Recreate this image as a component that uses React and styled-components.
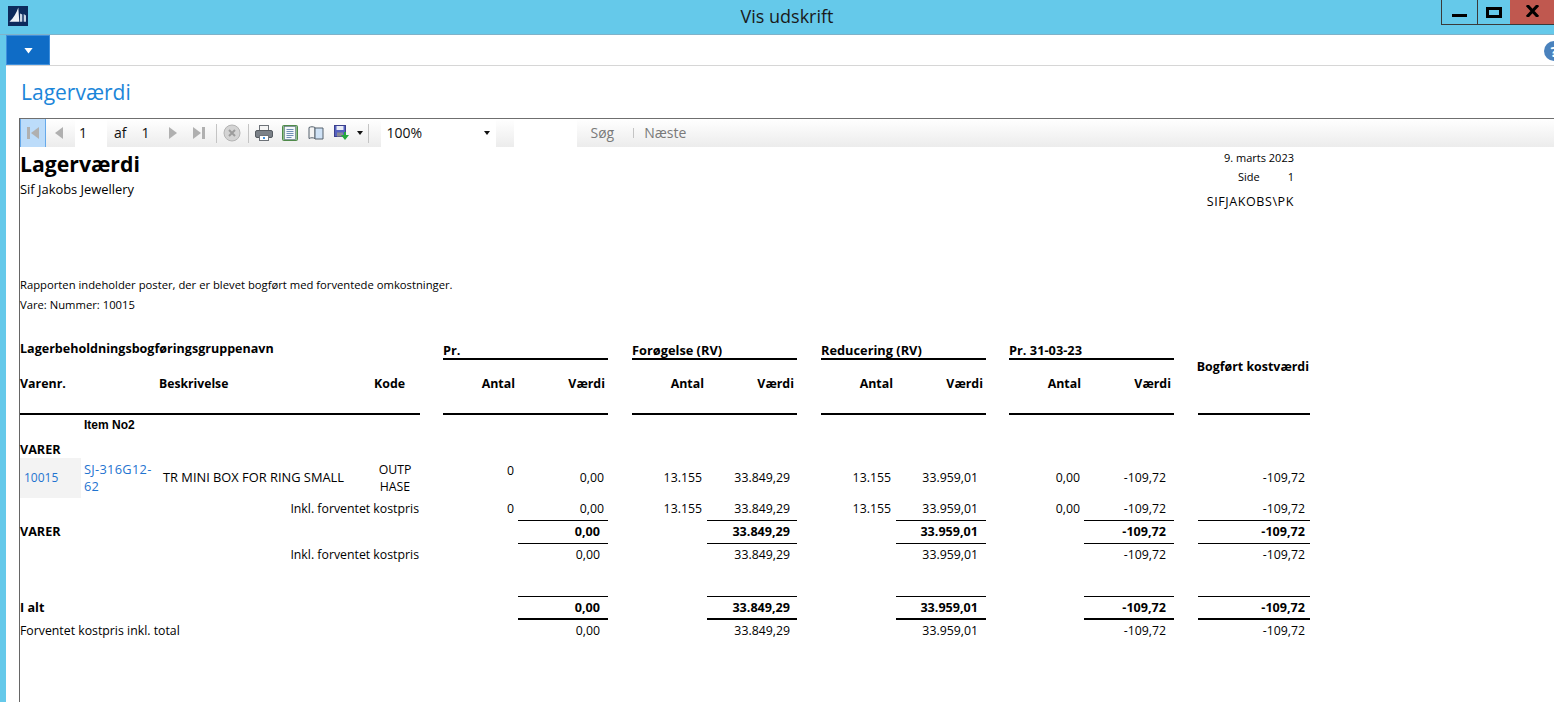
import styled, { createGlobalStyle } from "styled-components";

const Global = createGlobalStyle`
  html, body {
    margin: 0;
    height: 100%;
    overflow: hidden;
    background: #fff;
  }
  body {
    font-family: "Open Sans", "Noto Sans", sans-serif;
  }
`;

const Page = styled.div`
  width: 1554px;
  height: 702px;
  display: flex;
  flex-direction: column;
  background: #65c9ea;
  overflow: hidden;
`;

const TitleBar = styled.div`
  height: 34px;
  flex: none;
  display: flex;
  align-items: flex-start;
  border-bottom: 1px solid #7fb2c9;
`;

const Logo = styled.svg`
  width: 20px;
  height: 20px;
  margin: 6px 0 0 8px;
  flex: none;
`;

const WindowTitle = styled.div`
  flex: 1;
  text-align: center;
  font-size: 18px;
  line-height: 33px;
  color: #1a1a1a;
  padding-left: 105px;
`;

const WinButtons = styled.div`
  display: flex;
  height: 25px;
  flex: none;
`;

const WinButton = styled.div`
  width: ${(p) => p.$w}px;
  background: ${(p) => p.$bg || "transparent"};
  border-left: ${(p) => (p.$bg ? "0" : "1px solid #3a3a3a")};
  border-bottom: 1px solid #3a3a3a;
  box-sizing: border-box;
  display: flex;
  align-items: center;
  justify-content: center;
`;

const Body = styled.div`
  flex: 1;
  margin-left: 6px;
  background: #fff;
  display: flex;
  flex-direction: column;
  min-height: 0;
`;

const MenuBar = styled.div`
  height: 30px;
  flex: none;
  display: flex;
  justify-content: space-between;
  align-items: stretch;
  border-bottom: 1px solid #d6d6d6;
`;

const MenuButton = styled.div`
  width: 44px;
  box-sizing: border-box;
  background: #0f6cc6;
  border: 1px solid #3f8fdc;
  padding-top: 2px;
  display: flex;
  align-items: center;
  justify-content: center;
`;

const HelpIcon = styled.div`
  width: 20px;
  height: 20px;
  border-radius: 50%;
  background: #4a82bd;
  color: #fff;
  font-weight: 700;
  font-size: 15px;
  line-height: 20px;
  text-align: center;
  margin: 6px -10px 0 0;
`;

const PageTitle = styled.h1`
  margin: 0;
  height: 52px;
  flex: none;
  font-weight: 400;
  font-size: 21px;
  line-height: 52px;
  padding-left: 15px;
  color: #1c86d9;
`;

const Viewer = styled.div`
  flex: 1;
  margin-left: 13px;
  border-left: 1px solid #666;
  border-top: 1px solid #6f6f6f;
  display: flex;
  flex-direction: column;
  min-height: 0;
`;

const Toolbar = styled.div`
  height: 28px;
  flex: none;
  display: flex;
  align-items: stretch;
  background: linear-gradient(#fff, #ececec);
  font-size: 14px;
  color: #111;
`;

const ToolButton = styled.div`
  width: ${(p) => p.$w || 26}px;
  margin-left: ${(p) => p.$ml || 0}px;
  flex: none;
  box-sizing: border-box;
  display: flex;
  align-items: center;
  justify-content: center;
  background: ${(p) => (p.$active ? "#bcdcfa" : "transparent")};
  border: ${(p) => (p.$active ? "1px solid #66a9ea" : "0")};
  border-width: ${(p) => (p.$active ? "0 1px 0 1px" : "0")};
`;

const ToolSep = styled.div`
  width: 1px;
  margin: ${(p) => (p.$short ? "9px" : "5px")} 0 ${(p) => (p.$short ? "9px" : "4px")} ${(p) => p.$ml || 0}px;
  flex: none;
  background: #c4c4c4;
`;

const ToolInput = styled.div`
  width: ${(p) => p.$w}px;
  margin-left: ${(p) => p.$ml || 0}px;
  flex: none;
  box-sizing: border-box;
  background: #fff;
  padding: 0 6px 0 ${(p) => p.$pl || 4}px;
  line-height: 28px;
  display: flex;
  justify-content: space-between;
  align-items: center;
`;

const ToolText = styled.span`
  margin-left: ${(p) => p.$ml || 0}px;
  line-height: 28px;
  color: ${(p) => p.$color || "#111"};
`;

const Report = styled.div`
  flex: 1;
  min-height: 0;
  color: #000;
  font-size: 11.25px;
  display: flex;
  flex-direction: column;
`;

const ReportHead = styled.div`
  height: 73px;
  width: 1274px;
  flex: none;
  display: flex;
  justify-content: space-between;
`;

const ReportName = styled.div`
  font-size: 21.2px;
  font-weight: 700;
  line-height: 26px;
  margin-top: 4px;
  color: #000;
`;

const CompanyName = styled.div`
  font-size: 12.9px;
  line-height: 16px;
  margin-top: 4px;
`;

const MetaBlock = styled.div`
  display: flex;
  flex-direction: column;
  align-items: flex-end;
  padding-top: 3px;
  font-size: 11px;
  line-height: 15px;
`;

const SideRow = styled.div`
  display: flex;
  gap: 28px;
  margin: 4px 0 10px;
`;

const UserName = styled.span`
  font-size: 12.5px;
  letter-spacing: 0.6px;
`;

const Notes = styled.div`
  flex: none;
  height: 120px;
  padding-top: 55px;
  box-sizing: border-box;
  line-height: 20px;
`;

const Sheet = styled.div`
  display: grid;
  width: 1290px;
  grid-template-columns: 61px 78px 213px 48px 23px 75px 90px 24px 75px 90px 24px 75px 90px 23px 75px 90px 24px 112px;
  grid-template-rows: 20px 55px 20px 23px 40px 23px 23px 23px 30px 23px 23px;
`;

const Cell = styled.div`
  grid-column: ${(p) => p.$col} / span ${(p) => p.$span || 1};
  grid-row: ${(p) => p.$row} / span ${(p) => p.$rows || 1};
  box-sizing: border-box;
  display: flex;
  align-items: ${(p) => p.$align || "center"};
  justify-content: ${(p) => (p.$right ? "flex-end" : "flex-start")};
  padding: ${(p) => p.$pt || 0}px ${(p) => p.$pr || 0}px ${(p) => p.$pb ?? 2}px ${(p) => p.$pl || 0}px;
  font-weight: ${(p) => (p.$bold ? 700 : 400)};
  font-size: ${(p) => p.$size || (p.$bold ? 12.4 : 12.3)}px;
  color: #000;
  white-space: nowrap;
  border-bottom: ${(p) => (p.$line ? `${p.$line}px solid #000` : "0")};
`;

const ColumnNote = styled(Cell)`
  font-family: "Liberation Sans", Arial, sans-serif;
`;

const ItemLink = styled.span`
  color: #1f74d0;
  white-space: nowrap;
  line-height: 17px;
  font-size: ${(p) => p.$size || 12}px;
  letter-spacing: ${(p) => p.$spacing || 0}px;
`;

const CodeText = styled.span`
  white-space: normal;
  line-height: 17px;
  width: 40px;
  text-align: center;
`;

const Stripe = styled(Cell)`
  background: #f3f3f3;
`;

const groups = [
  { col: 6, title: "Pr." },
  { col: 9, title: "Forøgelse (RV)" },
  { col: 12, title: "Reducering (RV)" },
  { col: 15, title: "Pr. 31-03-23" },
];

// value columns and how far the figures sit from the right edge
const totalCols = [
  { col: 7, val: "0,00", pr: 8 },
  { col: 10, val: "33.849,29", pr: 7 },
  { col: 13, val: "33.959,01", pr: 8 },
  { col: 16, val: "-109,72", pr: 8 },
  { col: 18, val: "-109,72", pr: 5 },
];

const Nav = ({ last, flip, dim }) => (
  <svg width="14" height="14" viewBox="0 0 14 14" style={flip ? { transform: "scaleX(-1)" } : undefined}>
    {last && <rect x="1" y="1" width="3" height="12" fill={dim ? "#9a9a9a" : "#b0b0b0"} />}
    <path d={last ? "M13 1v12L5 7z" : "M11 1v12L3 7z"} fill={dim ? "#9a9a9a" : "#b0b0b0"} />
  </svg>
);

const Caret = ({ color = "#111", w = 6 }) => (
  <svg width={w} height={w / 2 + 1} viewBox="0 0 6 4">
    <path d="M0 0h6L3 4z" fill={color} />
  </svg>
);

const StopIcon = () => (
  <svg width="18" height="18" viewBox="0 0 18 18">
    <circle cx="9" cy="9" r="8" fill="#d4d4d4" stroke="#b4b4b4" />
    <path d="M6 6l6 6M12 6l-6 6" stroke="#9c9c9c" strokeWidth="2" />
  </svg>
);

const PrintIcon = () => (
  <svg width="18" height="16" viewBox="0 0 18 16">
    <rect x="4.5" y="0.5" width="9" height="5" fill="#f4f4f4" stroke="#6d7278" />
    <rect x="0.5" y="5.5" width="17" height="7" rx="1.5" fill="#7b8188" stroke="#565b61" />
    <rect x="4.5" y="10.5" width="9" height="5" fill="#fff" stroke="#6d7278" />
    <rect x="8" y="12" width="2" height="2" fill="#3f8fdc" />
  </svg>
);

const PageIcon = () => (
  <svg width="16" height="16" viewBox="0 0 16 16">
    <rect x="0.5" y="0.5" width="15" height="15" rx="1" fill="#8fbf87" stroke="#4f8a4a" />
    <rect x="2.5" y="1.5" width="11" height="13" fill="#f4f7fb" stroke="#5a6b80" strokeWidth="0.6" />
    <path d="M4.5 4.5h7M4.5 6.5h7M4.5 8.5h7M4.5 10.5h7M4.5 12.5h5" stroke="#6f8fb4" />
  </svg>
);

const BookIcon = () => (
  <svg width="16" height="14" viewBox="0 0 16 14">
    <path d="M1 1.5c2-1 4-1 6 0v11c-2-1-4-1-6 0z" fill="#f3f3f3" stroke="#55606c" />
    <path d="M7 2h8v11H7z" fill="#cfe2f6" stroke="#55606c" />
  </svg>
);

const SaveIcon = () => (
  <svg width="15" height="16" viewBox="0 0 15 16">
    <rect x="0.5" y="0.5" width="11" height="11" fill="#5561c0" stroke="#3b3f8c" />
    <rect x="2.5" y="1" width="7" height="4" fill="#e9ecf6" />
    <rect x="3" y="7.5" width="6" height="4" fill="#8a8a94" />
    <path d="M10 7h2v3h3l-4 5-4-5h3z" fill="#25a83d" />
  </svg>
);

const App = () => (
  <Page>
    <Global />
    <TitleBar>
      <Logo viewBox="0 0 20 20">
        <rect width="20" height="20" fill="#0c2a5c" />
        <path d="M1.5 15.7C5.5 12 8.5 7 10.3 1.5l1 14.2z" fill="#eef2f8" />
        <path d="M12 15.7V7.5l2.3 1v7.2zM15.7 15.7V8l2.3 1.5v6.2z" fill="#c8d4e4" />
      </Logo>
      <WindowTitle>Vis udskrift</WindowTitle>
      <WinButtons>
        <WinButton $w={36}>
          <svg width="15" height="12" viewBox="0 0 15 12">
            <rect y="8" width="15" height="3" fill="#000" />
          </svg>
        </WinButton>
        <WinButton $w={33}>
          <svg width="16" height="11" viewBox="0 0 16 11">
            <rect x="1.5" y="1.5" width="13" height="8" fill="none" stroke="#000" strokeWidth="3" />
          </svg>
        </WinButton>
        <WinButton $w={44} $bg="#c0584f">
          <svg width="13" height="12" viewBox="0 0 13 12" style={{ marginBottom: 2 }}>
            <path d="M1 0l11 12M12 0L1 12" stroke="#000" strokeWidth="3" />
          </svg>
        </WinButton>
      </WinButtons>
    </TitleBar>
    <Body>
      <MenuBar>
        <MenuButton>
          <Caret color="#fff" w={9} />
        </MenuButton>
        <HelpIcon>?</HelpIcon>
      </MenuBar>
      <PageTitle>Lagerværdi</PageTitle>
      <Viewer>
        <Toolbar>
          <ToolButton $active><Nav last /></ToolButton>
          <ToolButton><Nav /></ToolButton>
          <ToolInput $w={32} $ml={3}>1</ToolInput>
          <ToolText $ml={7}>af</ToolText>
          <ToolText $ml={15}>1</ToolText>
          <ToolButton $ml={10}><Nav flip /></ToolButton>
          <ToolButton><Nav last flip /></ToolButton>
          <ToolSep $ml={4} />
          <ToolButton $w={31}><StopIcon /></ToolButton>
          <ToolSep />
          <ToolButton $ml={2}><PrintIcon /></ToolButton>
          <ToolButton><PageIcon /></ToolButton>
          <ToolButton><BookIcon /></ToolButton>
          <ToolButton><SaveIcon /></ToolButton>
          <ToolButton $w={10}><Caret /></ToolButton>
          <ToolSep $ml={3} />
          <ToolInput $w={115} $ml={12} $pl={6}>
            100%
            <Caret />
          </ToolInput>
          <ToolInput $w={63} $ml={18} />
          <ToolText $ml={14} $color="#7a7a7a">Søg</ToolText>
          <ToolSep $ml={19} $short />
          <ToolText $ml={10} $color="#7a7a7a">Næste</ToolText>
        </Toolbar>
        <Report>
          <ReportHead>
            <div>
              <ReportName>Lagerværdi</ReportName>
              <CompanyName>Sif Jakobs Jewellery</CompanyName>
            </div>
            <MetaBlock>
              <span>9. marts 2023</span>
              <SideRow><span>Side</span><span>1</span></SideRow>
              <UserName>SIFJAKOBS\PK</UserName>
            </MetaBlock>
          </ReportHead>
          <Notes>
            <div>Rapporten indeholder poster, der er blevet bogført med forventede omkostninger.</div>
            <div>Vare: Nummer: 10015</div>
          </Notes>
          <Sheet>
            <Cell $col={1} $span={4} $row={1} $bold $size={12.55} $align="flex-start" $pb={0}>Lagerbeholdningsbogføringsgruppenavn</Cell>
            <Cell $col={1} $span={2} $row={2} $bold $line={2} $pb={6}>Varenr.</Cell>
            <Cell $col={3} $row={2} $bold $size={12.2} $line={2} $pb={6}>Beskrivelse</Cell>
            <Cell $col={4} $row={2} $bold $line={2} $pb={6} $pl={2}>Kode</Cell>
            {groups.map((g) => (
              <Cell key={g.col} $col={g.col} $span={2} $row={1} $bold $size={12.8} $line={2} $pb={0} $pt={2}>{g.title}</Cell>
            ))}
            {groups.map((g) => (
              <Cell key={g.col} $col={g.col} $row={2} $bold $right $pr={3} $line={2} $pb={6}>Antal</Cell>
            ))}
            {groups.map((g) => (
              <Cell key={g.col} $col={g.col + 1} $row={2} $bold $right $pr={3} $line={2} $pb={6}>Værdi</Cell>
            ))}
            <Cell $col={18} $row={1} $rows={2} $bold $right $line={2} $pr={1} $pb={20}>Bogført kostværdi</Cell>

            <ColumnNote $col={2} $span={2} $row={3} $bold $pl={3} $size={12} $pb={0}>Item No2</ColumnNote>
            <Cell $col={1} $span={2} $row={4} $bold $align="flex-end" $size={12.6} $pb={0}>VARER</Cell>

            <Stripe $col={1} $row={5} $pl={4}><ItemLink>10015</ItemLink></Stripe>
            <Cell $col={2} $row={5} $pl={3} $pb={0}>
              <ItemLink $size={12.8} $spacing={0.3}>SJ-316G12-<br />62</ItemLink>
            </Cell>
            <Cell $col={3} $row={5} $pl={4} $size={12.85}>TR MINI BOX FOR RING SMALL</Cell>
            <Cell $col={4} $row={5} $pb={0} $pl={3}><CodeText>OUTP HASE</CodeText></Cell>
            <Cell $col={6} $row={5} $right $pr={4} $align="flex-start" $pt={4} $pb={0}>0</Cell>
            <Cell $col={7} $row={5} $right $pr={4}>0,00</Cell>
            <Cell $col={9} $row={5} $right $pr={5}>13.155</Cell>
            <Cell $col={10} $row={5} $right $pr={7}>33.849,29</Cell>
            <Cell $col={12} $row={5} $right $pr={5}>13.155</Cell>
            <Cell $col={13} $row={5} $right $pr={8}>33.959,01</Cell>
            <Cell $col={15} $row={5} $right $pr={4}>0,00</Cell>
            <Cell $col={16} $row={5} $right $pr={8}>-109,72</Cell>
            <Cell $col={18} $row={5} $right $pr={5}>-109,72</Cell>

            <Cell $col={1} $span={4} $row={6} $right $pr={1}>Inkl. forventet kostpris</Cell>
            <Cell $col={6} $row={6} $right $pr={4}>0</Cell>
            <Cell $col={7} $row={6} $right $pr={4} $line={1} $pb={1}>0,00</Cell>
            <Cell $col={9} $row={6} $right $pr={5}>13.155</Cell>
            <Cell $col={10} $row={6} $right $pr={7} $line={1} $pb={1}>33.849,29</Cell>
            <Cell $col={12} $row={6} $right $pr={5}>13.155</Cell>
            <Cell $col={13} $row={6} $right $pr={8} $line={1} $pb={1}>33.959,01</Cell>
            <Cell $col={15} $row={6} $right $pr={4}>0,00</Cell>
            <Cell $col={16} $row={6} $right $pr={8} $line={1} $pb={1}>-109,72</Cell>
            <Cell $col={18} $row={6} $right $pr={5} $line={1} $pb={1}>-109,72</Cell>

            <Cell $col={1} $span={2} $row={7} $bold $size={12.6}>VARER</Cell>
            {totalCols.map((c) => (
              <Cell key={c.col} $col={c.col} $row={7} $right $pr={c.pr} $bold $size={12.6} $line={1} $pb={1}>{c.val}</Cell>
            ))}

            <Cell $col={1} $span={4} $row={8} $right $pr={1}>Inkl. forventet kostpris</Cell>
            {totalCols.map((c) => (
              <Cell key={c.col} $col={c.col} $row={8} $right $pr={c.pr}>{c.val}</Cell>
            ))}

            {totalCols.map((c) => (
              <Cell key={c.col} $col={c.col} $row={9} $line={1} $pb={0} />
            ))}

            <Cell $col={1} $span={2} $row={10} $bold $size={12.6} $pb={3}>I alt</Cell>
            {totalCols.map((c) => (
              <Cell key={c.col} $col={c.col} $row={10} $right $pr={c.pr} $bold $size={12.6} $line={2} $pb={1}>{c.val}</Cell>
            ))}

            <Cell $col={1} $span={3} $row={11} $pb={2}>Forventet kostpris inkl. total</Cell>
            {totalCols.map((c) => (
              <Cell key={c.col} $col={c.col} $row={11} $right $pr={c.pr} $pb={2}>{c.val}</Cell>
            ))}
          </Sheet>
        </Report>
      </Viewer>
    </Body>
  </Page>
);

export default App;
